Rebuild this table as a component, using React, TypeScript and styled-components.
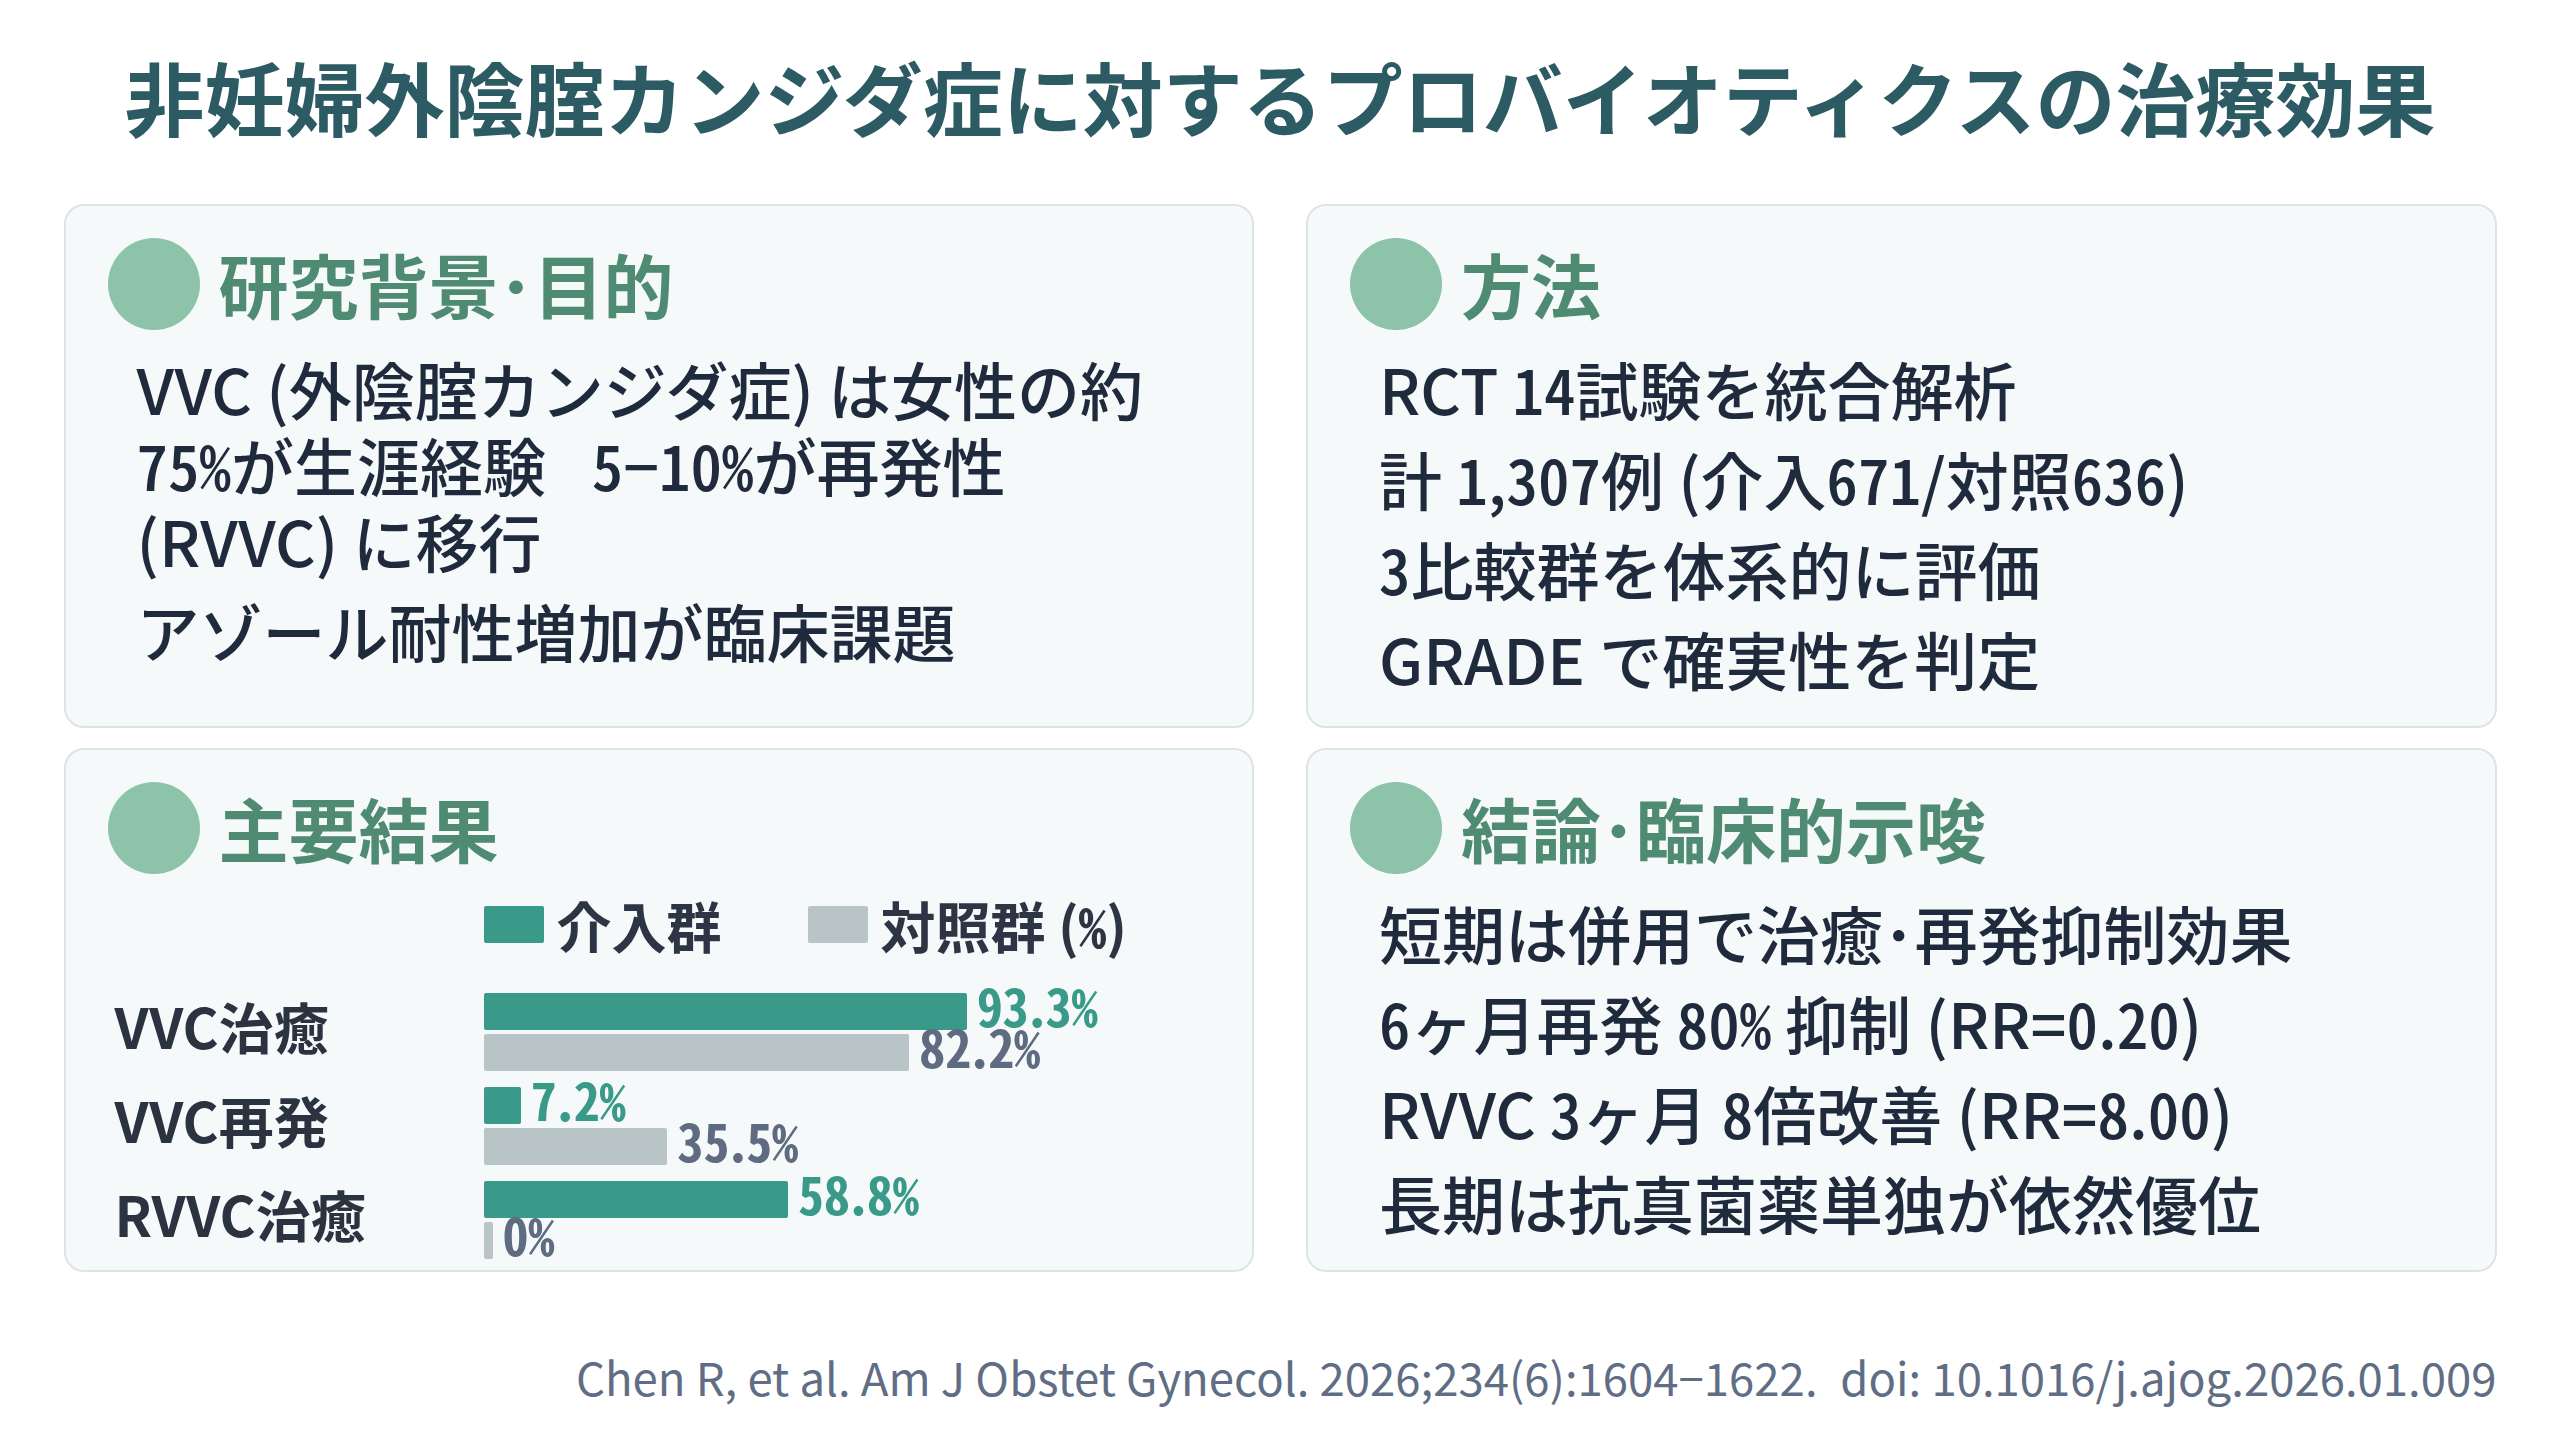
import styled, { createGlobalStyle } from 'styled-components';

const GlobalStyle = createGlobalStyle`
  html, body {
    margin: 0;
    padding: 0;
    background: #ffffff;
  }
  body {
    font-family: "Noto Sans CJK JP", "Noto Sans", sans-serif;
    color: #1f2a3c;
  }
`;

const Page = styled.div`
  width: 2560px;
  height: 1440px;
  display: flex;
  flex-direction: column;
  align-items: center;
  box-sizing: border-box;
  padding-top: 55px;
`;

const Title = styled.h1`
  margin: 0;
  font-size: 80px;
  line-height: 80px;
  font-weight: 700;
  color: #2c5b63;
`;

const Grid = styled.div`
  margin-top: 69px;
  width: 2433px;
  display: grid;
  grid-template-columns: 1fr 1fr;
  grid-template-rows: 524px 524px;
  column-gap: 52px;
  row-gap: 20px;
`;

const Card = styled.section`
  background: #f6f9fa;
  border: 2px solid #dce4e7;
  border-radius: 20px;
  padding: 32px 40px 0 42px;
  box-sizing: border-box;
`;

const SectionHead = styled.div`
  display: flex;
  align-items: center;
  gap: 19px;
`;

const Dot = styled.span`
  width: 92px;
  height: 92px;
  border-radius: 50%;
  background: #8cc3a9;
  flex-shrink: 0;
`;

const HeadText = styled.h2`
  margin: 0;
  font-size: 70px;
  line-height: 80px;
  font-weight: 700;
  color: #4f8b73;
`;

const List = styled.div`
  margin-top: 20px;
  padding-left: 29px;
  display: flex;
  flex-direction: column;
  gap: 14px;
`;

const Item = styled.p`
  margin: 0;
  font-size: 63px;
  line-height: 76px;
  font-weight: 500;
  color: #1f2a3c;
  white-space: nowrap;
`;

// digits and % are set half-width, as in the slide
const Num = styled.span`
  font-feature-settings: "hwid" 1;
`;

const Chart = styled.div`
  margin-top: 17px;
  display: grid;
  grid-template-columns: 376px 1fr;
`;

const Legend = styled.div`
  grid-column: 2;
  display: flex;
  align-items: center;
  height: 66px;
  margin-bottom: 35px;
`;

const LegendItem = styled.div`
  display: flex;
  align-items: center;
  gap: 13px;
  & + & {
    margin-left: 86px;
  }
`;

const Swatch = styled.span<{ $color: string }>`
  width: 60px;
  height: 37px;
  background: ${(p) => p.$color};
  border-radius: 2px;
`;

const LegendText = styled.span`
  font-size: 55px;
  line-height: 66px;
  font-weight: 700;
  color: #2d3544;
`;

const Groups = styled.div`
  grid-column: 1 / span 2;
  display: flex;
  flex-direction: column;
  gap: 14px;
`;

const Group = styled.div`
  display: grid;
  grid-template-columns: 376px 1fr;
  align-items: center;
`;

const GroupLabel = styled.div`
  padding-left: 7px;
  margin-bottom: 14px;
  font-size: 55px;
  line-height: 66px;
  font-weight: 700;
  color: #2b3340;
  white-space: nowrap;
`;

const Bars = styled.div`
  display: flex;
  flex-direction: column;
  gap: 4px;
`;

const BarRow = styled.div`
  display: flex;
  align-items: center;
  height: 37px;
`;

const Bar = styled.div<{ $color: string }>`
  height: 37px;
  background: ${(p) => p.$color};
  border-radius: 2px;
  flex-shrink: 0;
`;

const Value = styled.span<{ $color: string }>`
  margin-left: 10px;
  margin-bottom: 14px;
  font-size: 52px;
  line-height: 37px;
  font-weight: 700;
  color: ${(p) => p.$color};
  white-space: nowrap;
`;

const Footer = styled.div`
  width: 2433px;
  margin-top: 76px;
  text-align: right;
  font-size: 45.5px;
  line-height: 56px;
  color: #5f6e85;
`;

const TEAL = '#3a9a8a';
const GREY = '#b8c4c5';
const GREY_TEXT = '#5f6b80';
const PX_PER_PCT = 5.18;

const results = [
  { label: 'VVC治癒', a: 93.3, b: 82.2 },
  { label: 'VVC再発', a: 7.2, b: 35.5 },
  { label: 'RVVC治癒', a: 58.8, b: 0 },
];

const fmt = (v: number) => (v === 0 ? '0%' : `${v.toFixed(1)}%`);

const withNums = (text: string) =>
  text.split(/([0-9%]+)/).map((part, i) =>
    /[0-9%]/.test(part) ? <Num key={i}>{part}</Num> : part
  );

const Head = ({ children }: { children: string }) => (
  <SectionHead>
    <Dot />
    <HeadText>{children}</HeadText>
  </SectionHead>
);

const App = () => {
  return (
    <>
      <GlobalStyle />
      <Page>
        <Title>非妊婦外陰腟カンジダ症に対するプロバイオティクスの治療効果</Title>
        <Grid>
          <Card>
            <Head>研究背景･目的</Head>
            <List>
              <Item>
                VVC (外陰腟カンジダ症) は女性の約
                <br />
                {withNums('75%が生涯経験\u2002 5−10%が再発性')}
                <br />
                (RVVC) に移行
              </Item>
              <Item>アゾール耐性増加が臨床課題</Item>
            </List>
          </Card>

          <Card>
            <Head>方法</Head>
            <List>
              <Item>{withNums('RCT 14試験を統合解析')}</Item>
              <Item>{withNums('計 1,307例 (介入671/対照636)')}</Item>
              <Item>{withNums('3比較群を体系的に評価')}</Item>
              <Item>GRADE で確実性を判定</Item>
            </List>
          </Card>

          <Card>
            <Head>主要結果</Head>
            <Chart>
              <Legend>
                <LegendItem>
                  <Swatch $color={TEAL} />
                  <LegendText>介入群</LegendText>
                </LegendItem>
                <LegendItem>
                  <Swatch $color={GREY} />
                  <LegendText>{withNums('対照群 (%)')}</LegendText>
                </LegendItem>
              </Legend>
              <Groups>
                {results.map((r) => (
                  <Group key={r.label}>
                    <GroupLabel>{r.label}</GroupLabel>
                    <Bars>
                      <BarRow>
                        <Bar $color={TEAL} style={{ width: Math.max(r.a * PX_PER_PCT, 9) }} />
                        <Value $color={TEAL}>{withNums(fmt(r.a))}</Value>
                      </BarRow>
                      <BarRow>
                        <Bar $color={GREY} style={{ width: Math.max(r.b * PX_PER_PCT, 9) }} />
                        <Value $color={GREY_TEXT}>{withNums(fmt(r.b))}</Value>
                      </BarRow>
                    </Bars>
                  </Group>
                ))}
              </Groups>
            </Chart>
          </Card>

          <Card>
            <Head>結論･臨床的示唆</Head>
            <List>
              <Item>短期は併用で治癒･再発抑制効果</Item>
              <Item>{withNums('6ヶ月再発 80% 抑制 (RR=0.20)')}</Item>
              <Item>{withNums('RVVC 3ヶ月 8倍改善 (RR=8.00)')}</Item>
              <Item>長期は抗真菌薬単独が依然優位</Item>
            </List>
          </Card>
        </Grid>
        <Footer>
          Chen R, et al. Am J Obstet Gynecol. 2026;234(6):1604−1622.{'\u2002'}doi: 10.1016/j.ajog.2026.01.009
        </Footer>
      </Page>
    </>
  );
};

export default App;
